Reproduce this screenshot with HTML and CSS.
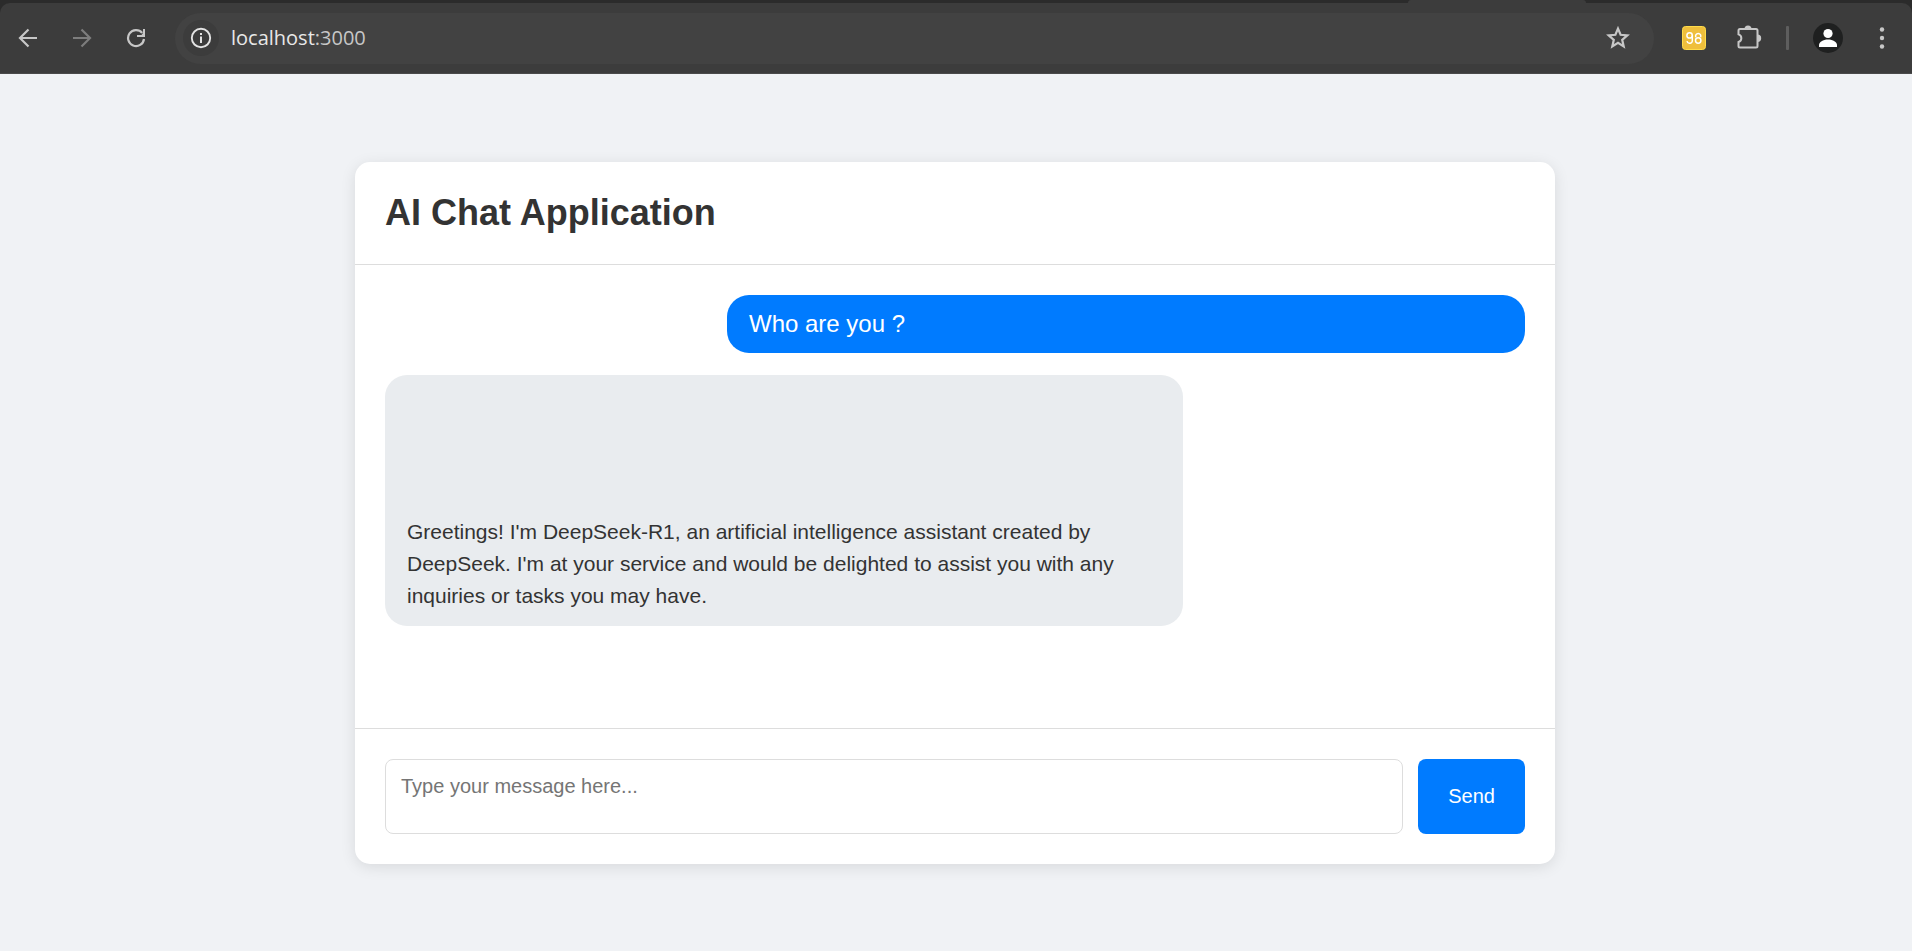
FILE: index.html
```html
<!DOCTYPE html>
<html lang="en">
<head>
<meta charset="utf-8">
<title>AI Chat Application</title>
<link rel="stylesheet" href="styles.css">
</head>
<body>
<header class="browser">
  <div class="tabstrip"><div class="active-tab"></div></div>
  <nav class="toolbar" aria-label="Browser toolbar">
    <button class="tool" aria-label="Back"><svg width="20" height="20" viewBox="0 0 20 20"><path d="M19 10H2M10.500 1.500L2 10l8.500 8.500" fill="none" stroke="#c7c7c7" stroke-width="2.200"/></svg></button>
    <button class="tool" aria-label="Forward"><svg width="20" height="20" viewBox="0 0 20 20"><path d="M1 10h17M9.500 1.500L18 10l-8.500 8.500" fill="none" stroke="#7d7d7d" stroke-width="2.200"/></svg></button>
    <button class="tool" aria-label="Reload"><svg width="20" height="20" viewBox="0 0 20 20"><path d="M18 11A8 8 0 1 1 16.200 4.900" fill="none" stroke="#c7c7c7" stroke-width="2.200"/><path d="M19 1v8h-8v-2h4.500L17 5V1z" fill="#c7c7c7"/></svg></button>
    <div class="address">
      <button class="site-info" aria-label="Site information"><svg width="22" height="22" viewBox="0 0 22 22"><circle cx="11" cy="11" r="9.200" fill="none" stroke="#e3e3e3" stroke-width="1.900"/><path d="M10 9.500h2V16h-2zM10 6h2v2h-2z" fill="#e3e3e3"/></svg></button>
      <div class="url">localhost<span class="port">:3000</span></div>
      <button class="star" aria-label="Bookmark"><svg width="24" height="24" viewBox="0 0 24 24"><path d="M12 2.600L14.600 8.800 21.300 9.400 16.200 13.800 17.700 20.400 12 16.900 6.300 20.400 7.800 13.800 2.700 9.400 9.400 8.800z" fill="none" stroke="#c7c7c7" stroke-width="2.200"/></svg></button>
    </div>
    <button class="tool extension" aria-label="Extension 98"><svg width="24" height="24" viewBox="0 0 24 24"><rect x=".5" y=".5" width="23" height="23" rx="3" fill="#efbf3c" stroke="#ffdc4a"/><g fill="none" stroke="#fff" stroke-width="1.500"><circle cx="7.600" cy="9.400" r="2.700"/><path d="M10.300 9.400V14a2.700 2.700 0 0 1-5.300 1.200"/><circle cx="16.200" cy="14.500" r="2.700"/><path d="M13.900 11.200a2.600 2.600 0 1 1 4.600 0"/></g></svg></button>
    <button class="tool" aria-label="Extensions"><svg width="26" height="26" viewBox="0 0 26 26"><path d="M4 4h16q1.500 0 1.500 1.500V21q0 1.500-1.500 1.500H4q-1.500 0-1.500-1.500v-4c3.800-1.300 3.800-6.300 0-7.600V5.500Q2.500 4 4 4z" fill="none" stroke="#c7c7c7" stroke-width="2"/><path d="M8.500 4a3.500 3.500 0 0 1 7 0zM21.500 9.500a3.700 3.700 0 0 1 0 7.400z" fill="#c7c7c7"/></svg></button>
    <div class="divider"></div>
    <button class="tool" aria-label="Profile"><svg width="30" height="30" viewBox="0 0 30 30"><circle cx="15" cy="15" r="15" fill="#1f2020"/><circle cx="15" cy="10.500" r="4.600" fill="#fff"/><path d="M6 24v-2c0-3 4-5.500 9-5.500s9 2.500 9 5.500v2z" fill="#fff"/></svg></button>
    <button class="tool" aria-label="Menu"><svg width="6" height="22" viewBox="0 0 6 22"><g fill="#c7c7c7"><circle cx="3" cy="2.500" r="2.200"/><circle cx="3" cy="11" r="2.200"/><circle cx="3" cy="19.500" r="2.200"/></g></svg></button>
  </nav>
</header>
<main class="page">
  <section class="chat">
    <header class="chat-header"><h1 class="title">AI Chat Application</h1></header>
    <div class="messages">
      <div class="message user">Who are you ?</div>
      <div class="message bot"><p class="reply">Greetings! I'm DeepSeek-R1, an artificial intelligence assistant created by DeepSeek. I'm at your service and would be delighted to assist you with any inquiries or tasks you may have.</p></div>
    </div>
    <form class="composer">
      <textarea class="input" aria-label="Message" placeholder="Type your message here..."></textarea>
      <button class="send" type="button">Send</button>
    </form>
  </section>
</main>
</body>
</html>
```

FILE: styles.css
```css
* { box-sizing: border-box; }

body {
  margin: 0;
  min-height: 100vh;
  display: flex;
  flex-direction: column;
  background: #f0f2f5;
  color: #333;
  font-family: "Liberation Sans", Arial, sans-serif;
}

button {
  border: 0;
  padding: 0;
  background: none;
  font-family: inherit;
}

.browser { background: #2b2b2b; }

.tabstrip {
  display: flex;
  justify-content: flex-end;
  height: 3px;
  padding-right: 326px;
}

.active-tab {
  width: 178px;
  background: #3c3c3c;
  border-radius: 3px 3px 0 0;
}

.toolbar {
  display: flex;
  align-items: center;
  height: 71px;
  padding: 0 3px 0 1px;
  background: #3c3c3c;
  border-bottom: 1px solid #4a4a4a;
  border-radius: 10px 10px 0 0;
}

.tool {
  display: flex;
  align-items: center;
  justify-content: center;
  width: 54px;
  height: 50px;
}

.extension { width: 56px; }

.address {
  flex: 1;
  display: flex;
  align-items: center;
  height: 51px;
  margin: 0 12px;
  padding: 0 24px 0 8px;
  background: #424242;
  border-radius: 26px;
}

.site-info {
  display: flex;
  align-items: center;
  justify-content: center;
  width: 36px;
  height: 36px;
  background: #3c3c3c;
  border-radius: 50%;
}

.url {
  flex: 1;
  padding-left: 12px;
  color: #e8e8e8;
  font: 20px/28px "Open Sans", "Noto Sans", sans-serif;
}

.port { color: #c7c7c7; }

.star { display: flex; }

.divider {
  width: 3px;
  height: 24px;
  margin: 0 12px 0 10px;
  background: #5e5e5e;
  border-radius: 1px;
}

.page {
  flex: 1;
  display: flex;
  align-items: center;
  justify-content: center;
  padding: 1px 2px 0 0;
}

.chat {
  display: flex;
  flex-direction: column;
  width: 100%;
  max-width: 1200px;
  height: 80vh;
  max-height: 702px;
  background: #fff;
  border-radius: 15px;
  box-shadow: 0 3px 15px rgba(0, 0, 0, 0.1);
}

.chat-header {
  padding: 30px;
  border-bottom: 1px solid #ddd;
}

.title {
  margin: 0;
  font-size: 36px;
  line-height: 42px;
}

.messages {
  flex: 1;
  display: flex;
  flex-direction: column;
  gap: 22px;
  padding: 30px;
  overflow-y: auto;
}

.message {
  width: 70%;
  padding: 15px 22px;
  border-radius: 22px;
  font-size: 24px;
  line-height: 28px;
}

.user {
  align-self: flex-end;
  background: #007bff;
  color: #fff;
}

.bot {
  align-self: flex-start;
  padding-top: 141px;
  padding-bottom: 14px;
  background: #e9ecef;
}

.reply {
  margin: 0;
  font-size: 21px;
  line-height: 32px;
}

.composer {
  display: flex;
  gap: 15px;
  padding: 30px;
  border-top: 1px solid #ddd;
}

.input {
  flex: 1;
  height: 75px;
  padding: 15px;
  border: 1px solid #ddd;
  border-radius: 8px;
  resize: none;
  font: 20px/23px "Liberation Sans", Arial, sans-serif;
}

.send {
  padding: 0 30px;
  background: #007bff;
  border-radius: 8px;
  color: #fff;
  font-size: 20px;
}
```
